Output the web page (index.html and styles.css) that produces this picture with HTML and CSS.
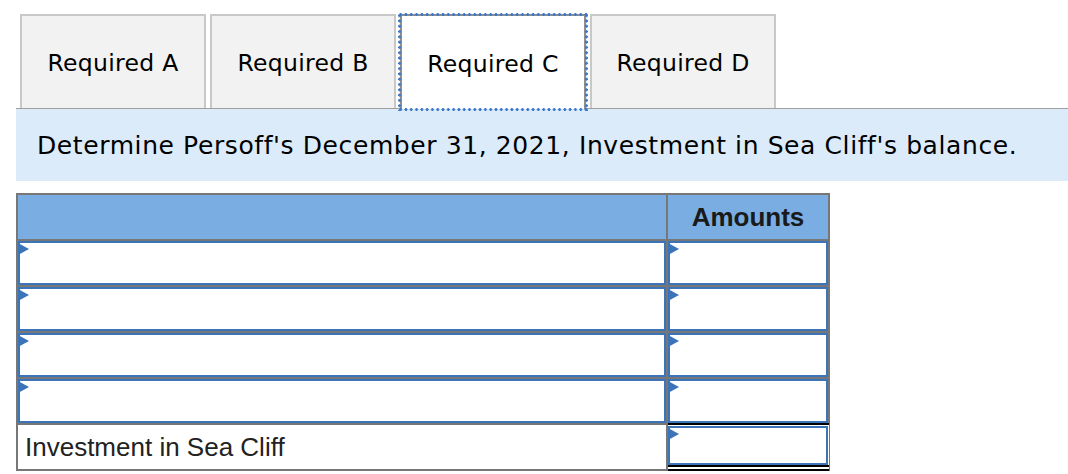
FILE: index.html
```html
<!DOCTYPE html>
<html lang="en">
<head>
  <meta charset="UTF-8">
  <title>Required C</title>
  <link rel="stylesheet" href="styles.css">
</head>
<body>
  <div class="page">
    <div class="tabs">
      <div class="tab">Required A</div>
      <div class="tab">Required B</div>
      <div class="tab active">Required C</div>
      <div class="tab">Required D</div>
    </div>
    <div class="prompt">Determine Persoff's December 31, 2021, Investment in Sea Cliff's balance.</div>

    <div class="sheet">
      <div class="head"></div>
      <div class="head amount">Amounts</div>

      <div class="cell"><div class="field"></div></div>
      <div class="cell"><div class="field"></div></div>

      <div class="cell"><div class="field"></div></div>
      <div class="cell"><div class="field"></div></div>

      <div class="cell"><div class="field"></div></div>
      <div class="cell"><div class="field"></div></div>

      <div class="cell"><div class="field"></div></div>
      <div class="cell"><div class="field"></div></div>

      <div class="cell label">Investment in Sea Cliff</div>
      <div class="cell total"><div class="field"></div></div>
    </div>
  </div>
</body>
</html>
```

FILE: styles.css
```css
body{
  margin: 0;
  background: #fff;
  font-family: "DejaVu Sans", Verdana, sans-serif;
  color: #000;
}
.page{
  padding: 14px 0 0 16px;
}
.tabs{
  display: flex;
  gap: 4px;
  padding-left: 4px;
  border-bottom: 1px solid #a0a0a0;
}
.tab{
  box-sizing: border-box;
  width: 186px;
  height: 94px;
  border: 2px solid #c8c8c8;
  border-bottom: none;
  background: #f2f2f2;
  display: flex;
  align-items: center;
  justify-content: center;
  font-size: 23.5px;
  letter-spacing: 0.3px;
  padding-top: 2px;
}
.tab.active{
  background: #fff;
  border-color: #8e8e8e;
  margin-bottom: -1px;
  height: 95px;
  position: relative;
  z-index: 1;
}
/* focus ring, drawn as round dots */
.tab.active::after{
  content: "";
  position: absolute;
  top: -3px;
  left: -4px;
  right: -4px;
  bottom: -2px;
  pointer-events: none;
  background:
    radial-gradient(circle, #3a77c9 1.2px, transparent 1.7px) 0 0 / 5.3px 3px repeat-x,
    radial-gradient(circle, #3a77c9 1.2px, transparent 1.7px) 0 100% / 5.3px 3px repeat-x,
    radial-gradient(circle, #3a77c9 1.2px, transparent 1.7px) 0 0 / 3px 5.3px repeat-y,
    radial-gradient(circle, #3a77c9 1.2px, transparent 1.7px) 100% 0 / 3px 5.3px repeat-y;
}
.prompt{
  background: #dcebf9;
  height: 72px;
  line-height: 74px;
  padding-left: 21px;
  font-size: 25px;
  letter-spacing: 0.6px;
}
.sheet{
  margin-top: 12px;
  display: grid;
  grid-template-columns: 648px 160px;
  grid-auto-rows: 44px;
  gap: 2px;
  width: max-content;
  background: #777;
  border: 2px solid #777;
  font-family: "Liberation Sans", Arial, sans-serif;
}
.head{
  background: #7aaee2;
}
.head.amount{
  display: flex;
  align-items: center;
  justify-content: center;
  font-weight: bold;
  font-size: 26px;
  color: #1a1a1a;
}
.cell{
  background: #fff;
}
.field{
  box-sizing: border-box;
  height: 100%;
  border: 2px solid #3b74b9;
  background: #fff;
  position: relative;
}
.field::before{
  content: "";
  position: absolute;
  left: -2px;
  top: 0;
  border-left: 11px solid #3b74b9;
  border-top: 6.5px solid transparent;
  border-bottom: 6.5px solid transparent;
}
.label{
  display: flex;
  align-items: center;
  padding-left: 7px;
  font-size: 26px;
  color: #222;
}
.total{
  margin: -2px -1px -2px 0;
  border-top: 2px solid #000;
  border-bottom: 6px double #000;
  padding-top: 1px;
}
.total .field{
  margin-right: 1px;
}
```
